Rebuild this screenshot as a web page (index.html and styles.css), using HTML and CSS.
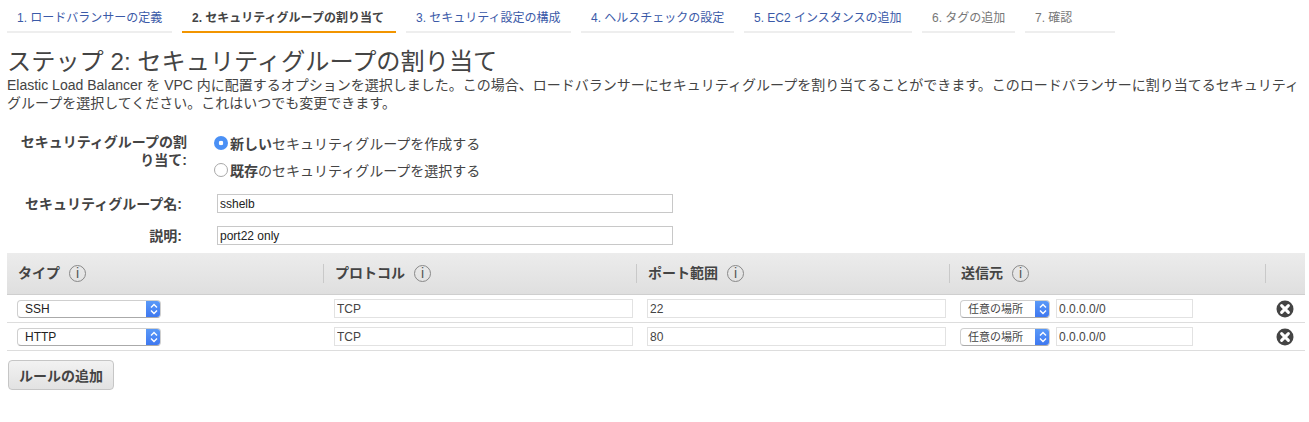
FILE: index.html
```html
<!DOCTYPE html>
<html lang="ja">
<head>
<meta charset="utf-8">
<title>ステップ 2: セキュリティグループの割り当て</title>
<link rel="stylesheet" href="styles.css">
</head>
<body>
<nav class="tabs">
  <a class="tab w1 link">1. ロードバランサーの定義</a>
  <a class="tab w2 active">2. セキュリティグループの割り当て</a>
  <a class="tab w3 link">3. セキュリティ設定の構成</a>
  <a class="tab w4 link">4. ヘルスチェックの設定</a>
  <a class="tab w5 link">5. EC2 インスタンスの追加</a>
  <a class="tab w6 muted">6. タグの追加</a>
  <a class="tab w7 muted">7. 確認</a>
</nav>
<h1 class="title">ステップ 2: セキュリティグループの割り当て</h1>
<p class="desc">Elastic Load Balancer を VPC 内に配置するオプションを選択しました。この場合、ロードバランサーにセキュリティグループを割り当てることができます。このロードバランサーに割り当てるセキュリティグループを選択してください。これはいつでも変更できます。</p>
<form class="form">
  <div class="field radio-field">
    <div class="label long">セキュリティグループの割り当て:</div>
    <div class="radios">
      <div class="radio-row"><span class="radio on"></span><span><b>新しい</b>セキュリティグループを作成する</span></div>
      <div class="radio-row"><span class="radio"></span><span><b>既存</b>のセキュリティグループを選択する</span></div>
    </div>
  </div>
  <div class="field name-field">
    <div class="label">セキュリティグループ名:</div>
    <input class="text wide" value="sshelb">
  </div>
  <div class="field desc-field">
    <div class="label">説明:</div>
    <input class="text wide" value="port22 only">
  </div>
</form>
<section class="rules">
  <div class="row head">
    <div class="th first">タイプ<span class="info">i</span></div>
    <div class="th">プロトコル<span class="info">i</span></div>
    <div class="th">ポート範囲<span class="info">i</span></div>
    <div class="th">送信元<span class="info">i</span></div>
    <div class="th"></div>
  </div>
  <div class="row body">
    <div class="td"><div class="select type"><span class="sel-text">SSH</span><span class="sel-arrow"><svg width="8" height="12" viewBox="0 0 8 12"><path d="M1 4.5 4 1.5 7 4.5M1 7.5 4 10.5 7 7.5" fill="none" stroke="#fff" stroke-width="1.4"/></svg></span></div></div>
    <div class="td"><input class="text cell-wide" value="TCP"></div>
    <div class="td"><input class="text cell-wide" value="22"></div>
    <div class="td source"><div class="select src"><span class="sel-text">任意の場所</span><span class="sel-arrow"><svg width="8" height="12" viewBox="0 0 8 12"><path d="M1 4.5 4 1.5 7 4.5M1 7.5 4 10.5 7 7.5" fill="none" stroke="#fff" stroke-width="1.4"/></svg></span></div><input class="text cidr" value="0.0.0.0/0"></div>
    <div class="td del"><svg width="18" height="18" viewBox="0 0 18 18"><circle cx="9" cy="9" r="8.5" fill="#444"/><path d="M5.6 5.6 12.4 12.4M12.4 5.6 5.6 12.4" stroke="#fff" stroke-width="3" stroke-linecap="round"/></svg></div>
  </div>
  <div class="row body">
    <div class="td"><div class="select type"><span class="sel-text">HTTP</span><span class="sel-arrow"><svg width="8" height="12" viewBox="0 0 8 12"><path d="M1 4.5 4 1.5 7 4.5M1 7.5 4 10.5 7 7.5" fill="none" stroke="#fff" stroke-width="1.4"/></svg></span></div></div>
    <div class="td"><input class="text cell-wide" value="TCP"></div>
    <div class="td"><input class="text cell-wide" value="80"></div>
    <div class="td source"><div class="select src"><span class="sel-text">任意の場所</span><span class="sel-arrow"><svg width="8" height="12" viewBox="0 0 8 12"><path d="M1 4.5 4 1.5 7 4.5M1 7.5 4 10.5 7 7.5" fill="none" stroke="#fff" stroke-width="1.4"/></svg></span></div><input class="text cidr" value="0.0.0.0/0"></div>
    <div class="td del"><svg width="18" height="18" viewBox="0 0 18 18"><circle cx="9" cy="9" r="8.5" fill="#444"/><path d="M5.6 5.6 12.4 12.4M12.4 5.6 5.6 12.4" stroke="#fff" stroke-width="3" stroke-linecap="round"/></svg></div>
  </div>
</section>
<button class="add" type="button">ルールの追加</button>
</body>
</html>
```
FILE: styles.css
```css
* { box-sizing: border-box; }
html, body { margin: 0; padding: 0; }
body {
  width: 1309px;
  height: 422px;
  overflow: hidden;
  background: #fff;
  color: #444;
  font-family: "Liberation Sans", "Noto Sans CJK JP", sans-serif;
  font-size: 14px;
  padding: 0 4px 0 7px;
}
.tabs { display: flex; gap: 10px; height: 33px; }
.tab {
  display: block;
  height: 33px;
  padding: 10px 0 0 10px;
  font-size: 12px;
  line-height: 16px;
  border-bottom: 2px solid #eee;
  white-space: nowrap;
}
.w1 { width: 165px; }
.w2 { width: 214px; }
.w3 { width: 165px; }
.w4 { width: 153px; }
.w5 { width: 168px; }
.w6 { width: 93px; }
.w7 { width: 90px; }
.link { color: #3b5aa8; }
.muted { color: #777; }
.active { color: #444; font-weight: 700; border-bottom-color: #f29500; }
.title {
  margin: 14px 0 0;
  font-size: 24.2px;
  line-height: 29px;
  font-weight: 400;
  color: #444;
}
.desc {
  margin: 0;
  width: 1298px;
  font-size: 14px;
  line-height: 18px;
  color: #444;
}
.form { margin-top: 21px; }
.field { display: flex; }
.label {
  width: 175px;
  margin-right: 35px;
  text-align: right;
  font-weight: 700;
  font-size: 14px;
  line-height: 18px;
}
.label.long { width: 180px; margin-right: 30px; }
.radio-field { height: 54px; }
.radios { display: flex; flex-direction: column; margin-left: -3px; margin-top: -4px; }
.radio-row { display: flex; align-items: center; height: 27px; font-size: 14px; gap: 2px; }
.radio {
  width: 14px;
  height: 14px;
  border-radius: 50%;
  border: 1px solid #a8a8a8;
  background: #fff;
  flex: none;
}
.radio.on { border: 0; background: radial-gradient(circle, #fff 0 2px, #4a90f5 2.6px); }
.name-field { height: 33px; align-items: center; }
.desc-field { height: 31px; align-items: center; }
.text {
  display: block;
  height: 19px;
  border: 1px solid #d5d5d5;
  padding: 0 2px;
  margin: 0;
  font: 12px "Liberation Sans", "Noto Sans CJK JP", sans-serif;
  color: #222;
  background: #fff;
  outline: none;
  border-radius: 0;
}
.wide { width: 456px; border-color: #c8c8c8; }
.rules { margin-top: 2px; width: 1298px; }
.row { display: grid; grid-template-columns: 316px 313px 313px 316px 40px; }
.head {
  height: 42px;
  background: linear-gradient(#ececec, #dfdfdf);
  border-bottom: 1px solid #cfcfcf;
  align-items: center;
}
.th {
  height: 19px;
  padding-left: 11px;
  border-left: 1px solid #c9c9c9;
  font-weight: 700;
  font-size: 14px;
  line-height: 19px;
  display: flex;
  align-items: center;
}
.th.first { border-left: 0; }
.info {
  width: 17px;
  height: 17px;
  margin-left: 9px;
  border: 1px solid #888;
  border-radius: 50%;
  font: 400 14px/15px "Liberation Sans", sans-serif;
  text-align: center;
  color: #555;
}
.body { height: 28px; border-bottom: 1px solid #ddd; align-items: center; }
.td { padding-left: 10px; display: flex; align-items: center; }
.cell-wide { width: 299px; border-color: #e2e2e2; color: #444; }
.td:nth-child(2) .cell-wide { margin-left: 1px; }
.td:nth-child(3) .cell-wide { margin-left: 1px; }
.select {
  display: flex;
  height: 18px;
  border: 1px solid #cfcfcf;
  border-bottom-color: #aaa;
  border-radius: 4px;
  background: #fff;
  font-size: 12px;
  line-height: 16px;
  color: #222;
  overflow: hidden;
}
.type { width: 144px; }
.src { width: 90px; margin-right: 6px; color: #444; margin-left: 1px; font-size: 11px; }
.sel-text { flex: 1; padding-left: 7px; }
.sel-arrow {
  width: 15px;
  background: linear-gradient(#5b9bf8, #3d76f0);
  display: flex;
  align-items: center;
  justify-content: center;
  margin: -1px -1px -1px 0;
}
.cidr { width: 137px; border-color: #e2e2e2; color: #444; }
.del { padding-left: 11px; }
.add {
  display: block;
  margin: 9px 0 0 1px;
  width: 106px;
  height: 30px;
  border: 1px solid #c6c6c6;
  border-radius: 4px;
  background: linear-gradient(#f2f2f2, #e2e2e2);
  font: 700 14px "Liberation Sans", "Noto Sans CJK JP", sans-serif;
  color: #444;
  padding: 0;
}
```
